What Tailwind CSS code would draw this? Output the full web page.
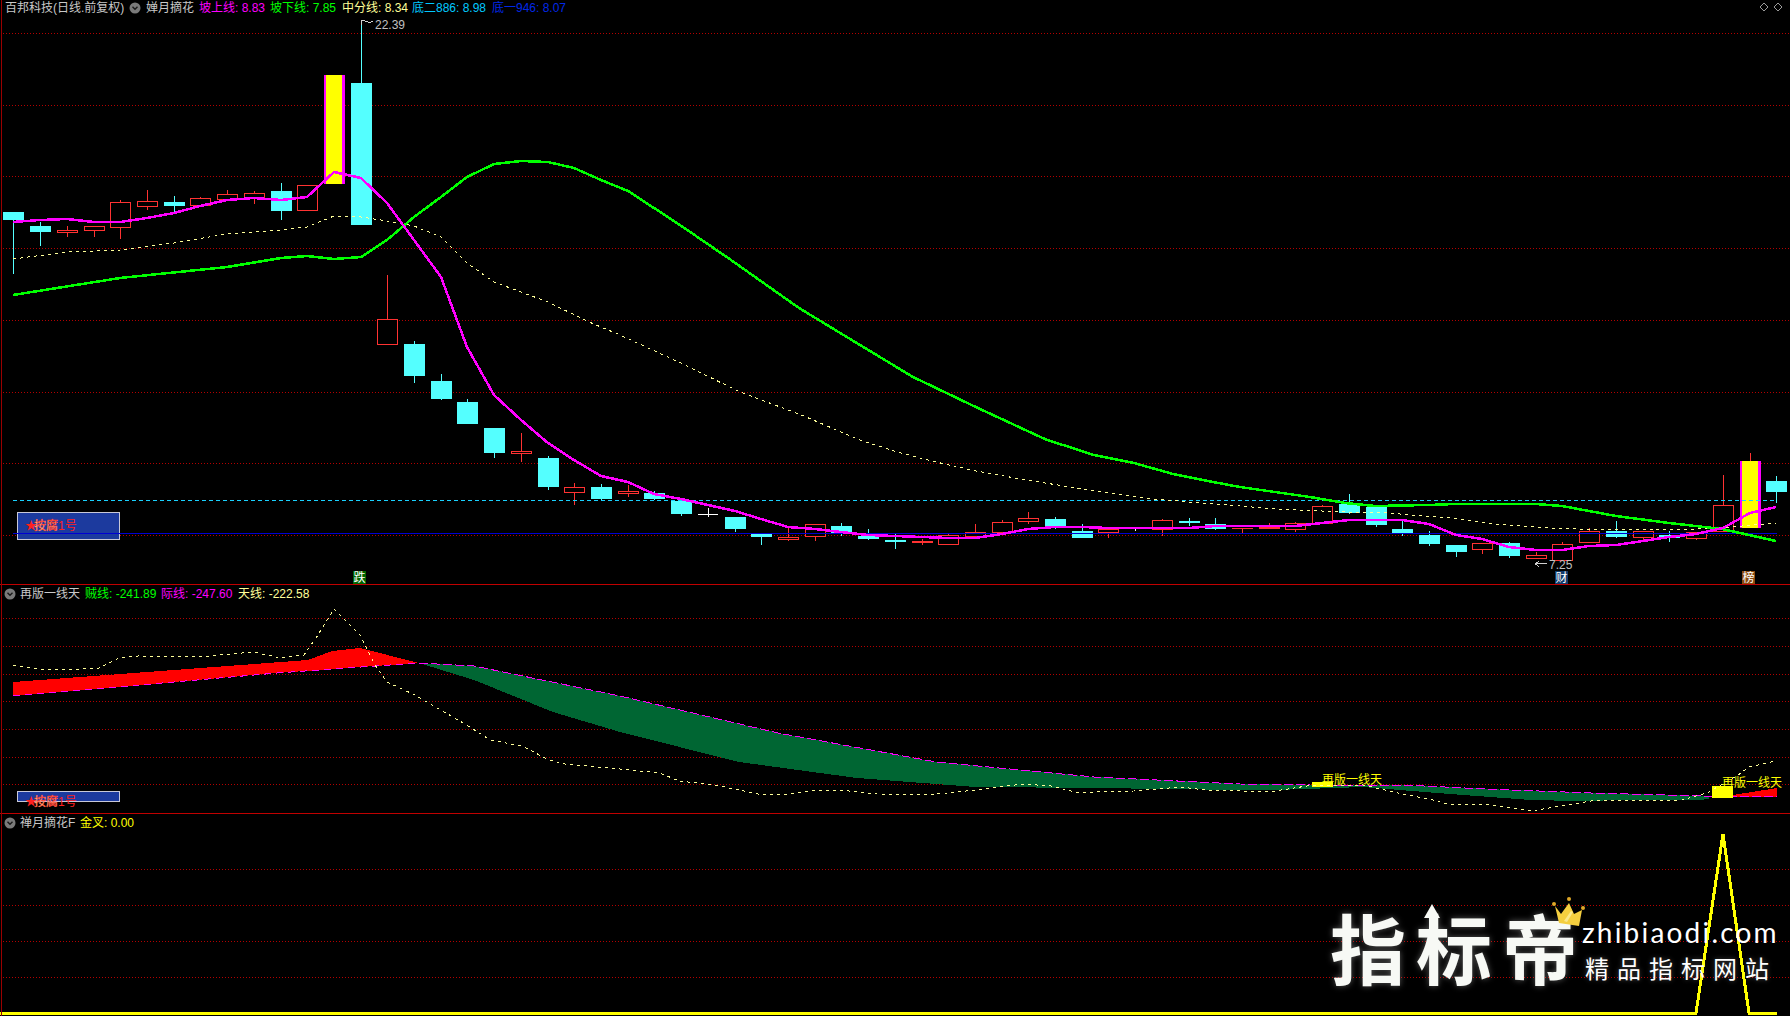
<!DOCTYPE html>
<html lang="zh">
<head>
<meta charset="utf-8">
<title>百邦科技</title>
<script src="https://cdn.jsdelivr.net/npm/@tailwindcss/browser@4"></script>
</head>
<body class="bg-black">
<div class="relative flex flex-col w-[1790px] h-[1016px] overflow-hidden bg-black text-xs leading-4 text-[#c8c8c8] [font-family:'Liberation_Sans','Noto_Sans_CJK_SC',sans-serif]">

  <!-- left axis rule -->
  <div class="absolute left-px top-0 bottom-0 w-px bg-[#9a0000] z-10"></div>

  <!-- Panel 1 -->
  <section class="relative h-[585px] border-b border-[#c00000] shrink-0">
    <svg class="absolute inset-0 w-[1790px] h-[585px]" viewBox="0 0 1790 585" shape-rendering="crispEdges" fill="none">
      <path stroke="#b40000" stroke-dasharray="1 2" d="M3 33.5H1790M3 105.5H1790M3 176.5H1790M3 248.5H1790M3 320.5H1790M3 392.5H1790M3 463.5H1790M3 535.5H1790"/>
      <!-- cyan wicks -->
      <path stroke="#54ffff" d="M13.5 220V274M40.5 222V246M174.5 196V213M281.5 183V220M361.5 20V83M414.5 341V383M441.5 374V400M467.5 399V402M494.5 453V458M548.5 456V490M601.5 484V500M654.5 491V500M681.5 500V516M735.5 529V532M761.5 537V545M841.5 523V536M868.5 529V540M895.5 534V549M1055.5 517V529M1082.5 524V531M1189.5 518V526M1215.5 518V530M1349.5 494V514M1376.5 505V527M1402.5 521V536M1429.5 531V546M1456.5 552V557M1509.5 542V558M1616.5 521V538M1669.5 531V542M1776.5 476V503"/>
      <!-- red wicks -->
      <path stroke="#ff3232" d="M67.5 226V237M94.5 231V237M120.5 200V239M147.5 190V210M200.5 197V198M227.5 190V194M254.5 191V204M387.5 275V319M521.5 433V462M574.5 483V505M628.5 485V497M788.5 527V541M815.5 537V541M922.5 539V545M948.5 534V535M975.5 524V532M1002.5 520V522M1028.5 512V524M1108.5 533V538M1162.5 519V536M1242.5 529V533M1269.5 523V526M1295.5 522V532M1322.5 505V506M1482.5 550V554M1536.5 552V555M1562.5 542V544M1589.5 528V531M1643.5 538V540M1696.5 539V540M1723.5 475V505M1750.5 453V461"/>
      <!-- cyan bodies -->
      <path fill="#54ffff" d="M3 212h21v8H3zM30 226h21v6H30zM164 202h21v4h-21zM271 191h21v20h-21zM351 83h21v142h-21zM404 344h21v32h-21zM431 381h21v18h-21zM457 402h21v22h-21zM484 428h21v25h-21zM538 458h21v29h-21zM591 487h21v12h-21zM644 493h21v6h-21zM671 501h21v13h-21zM725 517h21v12h-21zM751 534h21v3h-21zM831 526h21v7h-21zM858 536h21v3h-21zM885 540h21v2h-21zM1045 519h21v7h-21zM1072 531h21v7h-21zM1179 521h21v2h-21zM1205 524h21v5h-21zM1339 504h21v9h-21zM1366 507h21v18h-21zM1392 529h21v4h-21zM1419 535h21v9h-21zM1446 545h21v7h-21zM1499 543h21v13h-21zM1606 531h21v6h-21zM1659 535h21v3h-21zM1766 481h21v11h-21z"/>
      <!-- red bodies -->
      <path fill="#000" stroke="#ff3232" d="M57.5 230.5h20v2h-20zM84.5 226.500h20v4h-20zM110.500 202.500h20v25h-20zM137.500 201.500h20v5h-20zM190.500 198.500h20v7h-20zM217.500 194.500h20v5h-20zM244.500 193.500h20v4h-20zM297.500 185.500h20v25h-20zM377.500 319.500h20v25h-20zM511.500 451.500h20v2h-20zM564.500 487.500h20v5h-20zM618.500 491.500h20v2h-20zM778.500 537.500h20v2h-20zM805.500 524.500h20v12h-20zM938.500 535.500h20v9h-20zM965.500 532.500h20v4h-20zM992.500 522.500h20v10h-20zM1018.500 518.500h20v3h-20zM1098.500 529.500h20v3h-20zM1152.500 520.500h20v9h-20zM1285.500 523.500h20v6h-20zM1312.500 506.500h20v17h-20zM1472.500 543.500h20v6h-20zM1526.500 555.500h20v3h-20zM1552.500 544.500h20v16h-20zM1579.500 531.500h20v11h-20zM1633.500 531.500h20v6h-20zM1686.500 532.500h20v6h-20zM1713.500 505.500h20v26h-20z"/>
      <path fill="#ff3232" d="M912 541h21v2h-21zM1232 528h21v1h-21zM1259 526h21v3h-21z"/>
      <!-- doji -->
      <path stroke="#ffffff" d="M698 514.500h20M708.500 508V517M1135.500 529V531"/>
      <!-- limit-up bars -->
      <path fill="#ff00ff" d="M324 75h21v109h-21zM1740 461h21v67h-21z"/>
      <path fill="#ffff00" d="M326 75h16v109h-16zM1742 461h16v67h-16z"/>
      <!-- horizontal levels -->
      <path stroke="#19d1ff" stroke-dasharray="4 3" d="M13 500.500H1777"/>
      <!-- signal box -->
      <rect x="17.500" y="512.500" width="102" height="27" fill="#1c3a9e" stroke="#c8c8d8"/>
      <path stroke="#0000d2" d="M13 533.500H1777"/>
      <!-- mid line -->
      <polyline stroke="#ffff99" stroke-dasharray="3 4" points="13,259 67,252 120,250 174,243 227,234 281,230 307,227 334,216 361,217 387,221 414,226 441,237 467,263 494,282 521,292 548,302 589,322 620,335 685,365 740,392 799,414 860,440 897,452 936,462 976,471 1015,478 1094,491 1154,499 1201,503 1240,506 1275,509 1345,512 1387,513 1450,518 1496,524 1549,528 1608,530 1696,529 1731,527 1776,523"/>
      <!-- lower line -->
      <polyline stroke="#00ff00" stroke-width="2.500" points="13,295 120,278 227,267 281,258 307,256 334,259 361,257 387,240 414,217 441,197 467,177 494,164 521,161 548,162 574,168 601,180 628,191 680,225 731,260 799,308 860,345 913,377 980,409 1047,440 1063,445 1094,455 1134,463 1173,474 1213,482 1240,487 1275,492 1310,497 1345,503 1375,506 1428,505 1455,504 1536,504 1562,506 1616,516 1669,523 1722,529 1749,535 1776,541"/>
      <!-- upper line -->
      <polyline stroke="#ff00ff" stroke-width="2.500" points="13,222 40,220 67,219 94,222 120,222 147,218 174,213 200,206 227,200 254,198 281,200 307,197 334,172 361,178 387,203 414,240 441,277 467,347 494,395 521,420 548,443 574,460 601,476 628,482 654,494 681,499 708,505 735,511 761,519 788,527 815,529 841,532 868,535 895,536 922,537 948,538 975,538 1002,534 1028,529 1055,527 1082,527 1108,528 1135,528 1162,528 1189,528 1215,526 1242,526 1269,526 1295,526 1322,523 1349,520 1376,520 1402,520 1429,524 1456,535 1482,539 1509,547 1536,550 1562,550 1589,546 1616,545 1643,541 1669,537 1696,534 1723,528 1750,513 1776,507"/>
      <!-- price flags -->
      <path stroke="#d0d0d0" d="M361.500 20V25M361.500 20.500h3M365 21.500h3M368 22.500h3M371 21.500h2"/>
      <path stroke="#d0d0d0" d="M1535 563.500h12M1535 563.500l4-2M1535 563.500l4 3"/>
      <!-- signal tags -->
      <rect x="353" y="571" width="13" height="13" fill="#006400"/>
      <rect x="1555" y="571" width="13" height="13" fill="#103a6b"/>
      <rect x="1742" y="571" width="13" height="13" fill="#8b4a10"/>
      <!-- top right markers -->
      <path stroke="#9a9a9a" d="M1764 3l4 4-4 4-4-4zM1778 3l4 4-4 4-4-4z"/>
      <g shape-rendering="auto" font-size="12">
        <text x="375" y="29" fill="#c0c0c0">22.39</text>
        <text x="1549" y="569" fill="#c0c0c0">7.25</text>
        <text x="353.500" y="582" fill="#ffffff">跌</text>
        <text x="1555.500" y="582" fill="#ffffff">财</text>
        <text x="1742.500" y="582" fill="#ffffff">榜</text>
        <text y="530" fill="#ff2020"><tspan x="25">★</tspan><tspan x="34" fill="#ffe8a0" stroke="#ff2020" stroke-width="0.400">按腐</tspan><tspan x="58">1号</tspan></text>
      </g>
    </svg>
    <header class="relative flex items-center h-4 pl-[5px] whitespace-nowrap">
      <span class="w-[124px] shrink-0">百邦科技(日线.前复权)</span>
      <svg class="w-3 h-3 shrink-0 mr-[5px]" viewBox="0 0 12 12"><circle cx="6" cy="6" r="5.500" fill="#7a7a7a"/><path d="M3.500 4.800 6 7.300 8.500 4.800" stroke="#1a1a1a" stroke-width="1.400" fill="none"/></svg>
      <span class="w-[53px] shrink-0">婵月摘花</span>
      <span class="w-[71px] shrink-0 text-[#ff00ff]">坡上线: 8.83</span>
      <span class="w-[72px] shrink-0 text-[#00ff00]">坡下线: 7.85</span>
      <span class="w-[70px] shrink-0 text-[#ffff99]">中分线: 8.34</span>
      <span class="w-[80px] shrink-0 text-[#00c8ff]">底二886: 8.98</span>
      <span class="shrink-0 text-[#0028e6]">底一946: 8.07</span>
    </header>
  </section>

  <!-- Panel 2 -->
  <section class="relative h-[229px] border-b border-[#c00000] shrink-0">
    <svg class="absolute inset-0 w-[1790px] h-[229px]" viewBox="0 585 1790 229" shape-rendering="crispEdges" fill="none">
      <path stroke="#b40000" stroke-dasharray="1 2" d="M3 618.500H1790M3 646.500H1790M3 674.500H1790M3 701.500H1790M3 729.500H1790M3 757.500H1790M3 784.500H1790"/>
      <!-- red band -->
      <polygon fill="#ff0000" points="13,682 308,660 332,651 360,648 419,663 375,666 277,673 13,696"/>
      <!-- green band -->
      <polygon fill="#006633" points="419,663 474,666 620,696 778,733 936,762 1094,777 1240,784 1310,785 1403,785 1486,789 1591,793 1701,796 1712,798 1701,800 1629,800 1577,801 1531,800 1450,794 1363,787 1335,788 1275,790 1240,790 1094,788 976,787 857,778 739,762 620,732 553,712 474,680"/>
      <polygon fill="#ff0000" points="1733,795 1777,788 1777,797 1733,797"/>
      <polyline stroke="#ff00ff" stroke-dasharray="7 5" points="13,696 277,673 375,666 419,663"/>
      <polyline stroke="#ff00ff" stroke-dasharray="9 3" points="419,663 474,666 620,696 778,733 936,762 1094,777 1240,784 1310,785 1403,785 1486,789 1591,793 1701,796 1777,797"/>
      <!-- yellow blocks -->
      <path fill="#ffff00" d="M1312 782h21v5h-21zM1712 786h21v12h-21z"/>
      <!-- sky line -->
      <polyline stroke="#ffff99" stroke-dasharray="3 4" points="13,665 40,669 79,669 99,668 119,658 138,656 178,657 209,656 253,652 281,658 304,655 316,638 334,609 360,635 375,665 387,682 415,695 470,727 490,740 522,746 549,760 565,764 620,769 660,773 679,781 715,785 758,794 790,794 814,790 849,791 877,794 928,795 976,790 1023,784 1051,786 1075,792 1094,792 1134,791 1181,787 1205,790 1240,791 1275,791 1307,786 1363,785 1398,793 1433,800 1451,805 1482,804 1531,811 1573,804 1591,801 1682,800 1707,793 1738,775 1749,767 1775,761"/>
      <rect x="17.500" y="791.500" width="102" height="10" fill="#1c3a9e" stroke="#c8c8d8"/>
      <g shape-rendering="auto" font-size="12">
        <text x="1322" y="784" fill="#ffff00">再版一线天</text>
        <text x="1722" y="787" fill="#ffff00">再版一线天</text>
        <text y="806" fill="#ff2020"><tspan x="25">★</tspan><tspan x="34" fill="#ffe8a0" stroke="#ff2020" stroke-width="0.400">按腐</tspan><tspan x="58">1号</tspan></text>
      </g>
    </svg>
    <header class="relative flex items-center h-[18px] pl-[4px] whitespace-nowrap">
      <svg class="w-3 h-3 shrink-0 mr-1" viewBox="0 0 12 12"><circle cx="6" cy="6" r="5.500" fill="#7a7a7a"/><path d="M3.500 4.800 6 7.300 8.500 4.800" stroke="#1a1a1a" stroke-width="1.400" fill="none"/></svg>
      <span class="w-[65px] shrink-0">再版一线天</span>
      <span class="w-[76px] shrink-0 text-[#00ff00]">贼线: -241.89</span>
      <span class="w-[77px] shrink-0 text-[#ff00ff]">际线: -247.60</span>
      <span class="shrink-0 text-[#ffff99]">天线: -222.58</span>
    </header>
  </section>

  <!-- Panel 3 -->
  <section class="relative flex-1">
    <svg class="absolute inset-0 w-[1790px] h-[201px]" viewBox="0 815 1790 201" shape-rendering="crispEdges" fill="none">
      <path stroke="#b40000" stroke-dasharray="1 2" d="M3 870.500H1790M3 906.500H1790M3 942.500H1790M3 978.500H1790"/>
      <polyline stroke="#ffff00" stroke-width="3" points="0,1014 1696,1014 1723,835 1749,1014 1777,1014"/>
    </svg>
    <header class="relative flex items-center h-[18px] pl-[4px] whitespace-nowrap">
      <svg class="w-3 h-3 shrink-0 mr-1" viewBox="0 0 12 12"><circle cx="6" cy="6" r="5.500" fill="#7a7a7a"/><path d="M3.500 4.800 6 7.300 8.500 4.800" stroke="#1a1a1a" stroke-width="1.400" fill="none"/></svg>
      <span class="w-[60px] shrink-0">禅月摘花F</span>
      <span class="shrink-0 text-[#ffff00]">金叉: 0.00</span>
    </header>

    <!-- watermark -->
    <div class="absolute left-[1330px] top-[82px] w-[450px] h-[110px]">
      <div class="absolute left-0 top-[2px] text-[76px] leading-[96px] font-bold tracking-[10px] text-[#f7f9f5] whitespace-nowrap [text-shadow:0_0_6px_rgba(255,255,255,0.35)] [font-family:'Noto_Sans_CJK_SC',sans-serif]">指标帝</div>
      <svg class="absolute left-[92px] top-[8px] w-5 h-7" viewBox="0 0 20 28"><path d="M10 0 18 14H13V28H7V14H2Z" fill="#f7f9f5"/></svg>
      <svg class="absolute left-[221px] top-[1px] w-[35px] h-[32px]" viewBox="0 0 35 32">
        <circle cx="3" cy="7" r="2" fill="#e0a828"/><circle cx="18" cy="2" r="2" fill="#e0a828"/><circle cx="32" cy="11" r="2" fill="#e0a828"/>
        <path d="M4 9 10 17 18 6 23 17 31 13 28 29 8 26Z" fill="#f5cf3f"/>
        <path d="M13 24 20 14 22 15 16 25Z" fill="#fbe88a"/>
      </svg>
      <div class="absolute left-[252px] top-[20px] text-[28px] leading-8 tracking-[2.200px] text-white whitespace-nowrap [font-family:'Lato',sans-serif]">zhibiaodi.com</div>
      <div class="absolute left-[255px] top-[56px] text-2xl leading-8 tracking-[8px] text-white whitespace-nowrap [text-shadow:0_0_5px_rgba(255,255,255,0.3)] [font-family:'Noto_Sans_CJK_SC',sans-serif]">精品指标网站</div>
    </div>
  </section>
</div>
</body>
</html>
